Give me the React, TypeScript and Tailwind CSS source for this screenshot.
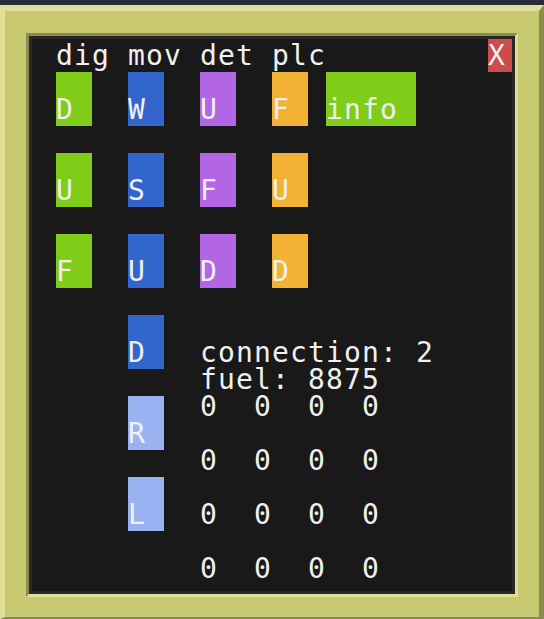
import React from 'react';

// ComputerCraft-style pocket terminal: 26 cols x 20 rows, 18x27 px cells

interface Btn {
  pos: string;
  color: string;
  label: string;
}

const buttons: Btn[] = [
  // dig
  { pos: 'col-start-2 row-start-2', color: 'bg-[#7fcc19]', label: 'D' },
  { pos: 'col-start-2 row-start-5', color: 'bg-[#7fcc19]', label: 'U' },
  { pos: 'col-start-2 row-start-8', color: 'bg-[#7fcc19]', label: 'F' },
  // mov
  { pos: 'col-start-6 row-start-2', color: 'bg-[#3366cc]', label: 'W' },
  { pos: 'col-start-6 row-start-5', color: 'bg-[#3366cc]', label: 'S' },
  { pos: 'col-start-6 row-start-8', color: 'bg-[#3366cc]', label: 'U' },
  { pos: 'col-start-6 row-start-11', color: 'bg-[#3366cc]', label: 'D' },
  { pos: 'col-start-6 row-start-14', color: 'bg-[#99b2f2]', label: 'R' },
  { pos: 'col-start-6 row-start-17', color: 'bg-[#99b2f2]', label: 'L' },
  // det
  { pos: 'col-start-10 row-start-2', color: 'bg-[#b266e5]', label: 'U' },
  { pos: 'col-start-10 row-start-5', color: 'bg-[#b266e5]', label: 'F' },
  { pos: 'col-start-10 row-start-8', color: 'bg-[#b266e5]', label: 'D' },
  // plc
  { pos: 'col-start-14 row-start-2', color: 'bg-[#f2b233]', label: 'F' },
  { pos: 'col-start-14 row-start-5', color: 'bg-[#f2b233]', label: 'U' },
  { pos: 'col-start-14 row-start-8', color: 'bg-[#f2b233]', label: 'D' },
];

const slotRows = ['row-start-14', 'row-start-16', 'row-start-18', 'row-start-20'];
const slotCols = ['col-start-10', 'col-start-13', 'col-start-16', 'col-start-19'];

const App: React.FC = () => {
  return (
    <div className="w-[544px] h-[619px] overflow-hidden bg-[#272c3c] pt-[5px]">
      {/* Outer gold frame */}
      <div className="h-[614px] border-t-[6px] border-l-[5px] border-r-[5px] border-b-[2px] border-t-[#dfdf98] border-l-[#dfdf98] border-r-[#8b8b4e] border-b-[#8b8b4e] bg-[#c8c870] pt-[22px] pl-[21px] pr-[21px] pb-[20px]">
        {/* Inset slot */}
        <div className="w-[492px] h-[564px] border-[3px] border-t-[#8b8b4e] border-l-[#8b8b4e] border-b-[#dfdf98] border-r-[#dfdf98]">
          <div className="h-full border-[3px] border-[#282828]">
            {/* Terminal */}
            <div className="h-full bg-[#191919] p-[6px] font-['DejaVu_Sans_Mono',monospace] text-[28px] leading-[21px] tracking-[1.14px] text-[#f0f0f0]">
              <div className="grid grid-cols-[repeat(26,18px)] grid-rows-[repeat(20,27px)]">
                <div className="col-start-2 col-span-16 row-start-1 whitespace-pre">dig mov det plc</div>

                {/* close */}
                <div className="col-start-26 row-start-1 -mt-[6px] -mr-[6px] bg-[#cc4c4c] pt-[6px]">X</div>

                {buttons.map((b, i) => (
                  <div key={i} className={`${b.pos} col-span-2 row-span-2 ${b.color} flex flex-col justify-end`}>
                    <div className="h-[27px]">{b.label}</div>
                  </div>
                ))}

                <div className="col-start-17 col-span-5 row-start-2 row-span-2 bg-[#7fcc19] flex flex-col justify-end">
                  <div className="h-[27px]">info</div>
                </div>

                <div className="col-start-10 col-span-15 row-start-12 whitespace-pre">connection: 2</div>
                <div className="col-start-10 col-span-15 row-start-13 whitespace-pre">fuel: 8875</div>

                {slotRows.map((r) =>
                  slotCols.map((c) => (
                    <div key={r + c} className={`${r} ${c}`}>0</div>
                  ))
                )}
              </div>
            </div>
          </div>
        </div>
      </div>
    </div>
  );
};

export default App;
